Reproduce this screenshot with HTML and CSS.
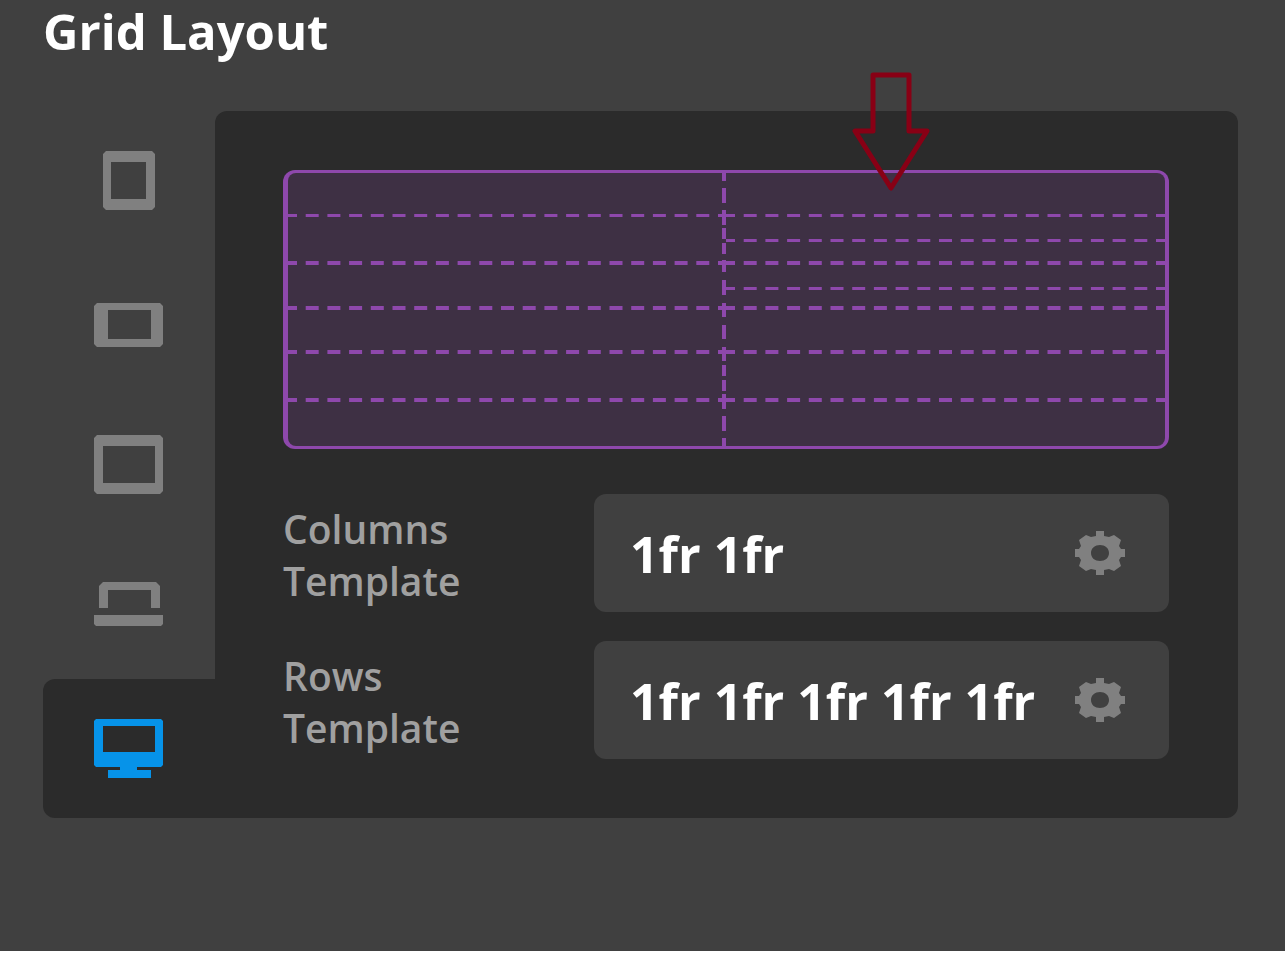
FILE: index.html
```html
<!DOCTYPE html>
<html lang="en">
<head>
    <meta charset="UTF-8">
    <meta name="viewport" content="width=device-width, initial-scale=1.0">
    <title>Grid Layout</title>
    <link rel="stylesheet" href="styles.css">
</head>
<body>

    <h1>Grid Layout</h1>

    <div class="layout">
        <!-- Breakpoint tabs -->
        <div class="tabs">
            <button class="tab" type="button" aria-label="Tablet portrait">
                <svg width="69" height="59" viewBox="0 0 69 59">
                    <path fill-rule="evenodd" d="M12 0H58L61 3V56L58 59H12L9 56V3ZM17 11V48H52V11Z"/>
                </svg>
            </button>
            <button class="tab" type="button" aria-label="Phone landscape">
                <svg width="69" height="59" viewBox="0 0 69 59">
                    <path fill-rule="evenodd" d="M3 10H66L69 13V51L66 54H3L0 51V13ZM14 17V46H57V17Z"/>
                </svg>
            </button>
            <button class="tab" type="button" aria-label="Tablet landscape">
                <svg width="69" height="59" viewBox="0 0 69 59">
                    <path fill-rule="evenodd" d="M3 0H66L69 3V56L66 59H3L0 56V3ZM9 11V48H61V11Z"/>
                </svg>
            </button>
            <button class="tab" type="button" aria-label="Laptop">
                <svg width="69" height="59" viewBox="0 0 69 59">
                    <path d="M9 5H62L66 9V31H57V13H14V31H5V9ZM0 38H69V47L67 49H2L0 47Z"/>
                </svg>
            </button>
            <button class="tab active" type="button" aria-label="Desktop">
                <svg width="69" height="59" viewBox="0 0 69 59">
                    <path fill-rule="evenodd" d="M2 0H67L69 2V46L67 48H43V51H57V59H14V51H26V48H2L0 46V2ZM9 7V33H61V7Z"/>
                </svg>
            </button>
        </div>

        <div class="panel">
            <!-- Grid preview -->
            <svg class="preview" viewBox="0 0 886 279" preserveAspectRatio="none">
                <rect class="frame" width="886" height="279" rx="12"/>
                <rect class="inside" x="5" y="3" width="877" height="273" rx="8"/>
                <g class="rows">
                    <path d="M5 45.5H441M443 45.5H882"/>
                    <path d="M443 70.5H882"/>
                    <path d="M443 118.5H882"/>
                </g>
                <g class="rows thick">
                    <path d="M5 93H441M443 93H882"/>
                    <path d="M5 138H441M443 138H882"/>
                    <path d="M5 182H441M443 182H882"/>
                    <path d="M5 230H441M443 230H882"/>
                </g>
                <path class="column" d="M441 3V276"/>
            </svg>

            <div class="field-row">
                <label for="columns">Columns<br>Template</label>
                <div class="field">
                    <input id="columns" type="text" value="1fr 1fr">
                    <button class="gear" type="button" aria-label="Columns settings">
                        <svg width="50" height="44" viewBox="0 0 50 44">
                            <path fill-rule="evenodd" d="M21 0H29V5L34 6L39 4L46 9L44 15L46 18H50V26H46L44 29L46 35L39 40L34 38L29 39V44H21V39L16 38L11 40L4 35L6 29L4 26H0V18H4L6 15L4 9L11 4L16 6L21 5ZM25 14C20 14 16 17 16 22S20 30 25 30S34 27 34 22S30 14 25 14Z"/>
                        </svg>
                    </button>
                </div>
            </div>

            <div class="field-row">
                <label for="rows">Rows<br>Template</label>
                <div class="field">
                    <input id="rows" type="text" value="1fr 1fr 1fr 1fr 1fr">
                    <button class="gear" type="button" aria-label="Rows settings">
                        <svg width="50" height="44" viewBox="0 0 50 44">
                            <path fill-rule="evenodd" d="M21 0H29V5L34 6L39 4L46 9L44 15L46 18H50V26H46L44 29L46 35L39 40L34 38L29 39V44H21V39L16 38L11 40L4 35L6 29L4 26H0V18H4L6 15L4 9L11 4L16 6L21 5ZM25 14C20 14 16 17 16 22S20 30 25 30S34 27 34 22S30 14 25 14Z"/>
                        </svg>
                    </button>
                </div>
            </div>

            <!-- Pointer over the right column -->
            <svg class="arrow" width="78" height="120" viewBox="0 0 78 120">
                <path d="M21 3H57V59H75L39 116L3 59H21Z"/>
            </svg>
        </div>
    </div>

</body>
</html>
```
FILE: styles.css
```css
html {
    background-color: #ffffff;
}
body {
    box-sizing: border-box;
    min-height: calc(100vh - 2px);
    margin: 0 2px 2px 0;
    padding: 0 47px 0 43px;
    background-color: #404040;
    font-family: "Open Sans", "Noto Sans", sans-serif;
}
h1 {
    margin: 0 0 49px;
    font-size: 49px;
    line-height: 62px;
    font-weight: 700;
    color: #ffffff;
}
button {
    padding: 0;
    border: none;
    background: none;
    cursor: pointer;
}
svg {
    display: block;
}
.layout {
    display: flex;
}
/* Breakpoint tabs */
.tabs {
    display: flex;
    flex-direction: column;
    flex-shrink: 0;
    gap: 3px;
    width: 172px;
}
.tab {
    display: flex;
    align-items: center;
    height: 139px;
    padding-left: 51px;
    fill: #808080;
}
.tab.active {
    background-color: #2b2b2b;
    border-radius: 12px 0 0 12px;
    fill: #0693e9;
}
/* Panel */
.panel {
    position: relative;
    flex: 1;
    min-width: 0;
    padding: 59px 69px 59px 68px;
    background-color: #2b2b2b;
    border-radius: 12px 12px 12px 0;
}
.preview {
    width: 100%;
    height: 279px;
    margin-bottom: 45px;
    fill: none;
    stroke: #8e48ac;
}
.frame {
    fill: #8e48ac;
    stroke: none;
}
.inside {
    fill: #3e3044;
    stroke: none;
}
.rows {
    stroke-width: 3px;
    stroke-dasharray: 13 8.7;
    stroke-dashoffset: 4px;
}
.thick {
    stroke-width: 4px;
}
.column {
    stroke-width: 4px;
    stroke-dasharray: 8 7 15 7 15 3 11 4 11 6 12 8 15 8 14 8 14 8 14 4 11 4 11 3 15 7 15 7 8;
}
.field-row {
    display: flex;
    align-items: center;
}
.field-row + .field-row {
    margin-top: 29px;
}
.field-row label {
    flex-shrink: 0;
    width: 311px;
    padding-top: 4px;
    font-size: 39px;
    line-height: 52px;
    font-weight: 600;
    color: #a0a0a0;
}
.field {
    display: flex;
    align-items: center;
    flex: 1;
    min-width: 0;
    height: 118px;
    background-color: #404040;
    border-radius: 12px;
}
.field input {
    box-sizing: border-box;
    flex: 1;
    min-width: 0;
    height: 100%;
    padding: 2px 0 0 36px;
    border: none;
    outline: none;
    background: none;
    font-family: inherit;
    font-size: 50px;
    font-weight: 700;
    color: #ffffff;
}
.gear {
    margin-right: 44px;
    fill: #808080;
}
/* Arrow */
.arrow {
    position: absolute;
    top: -39px;
    left: 66%;
    margin-left: -38px;
    fill: none;
    stroke: #880015;
    stroke-width: 5px;
    stroke-linejoin: round;
}
```
